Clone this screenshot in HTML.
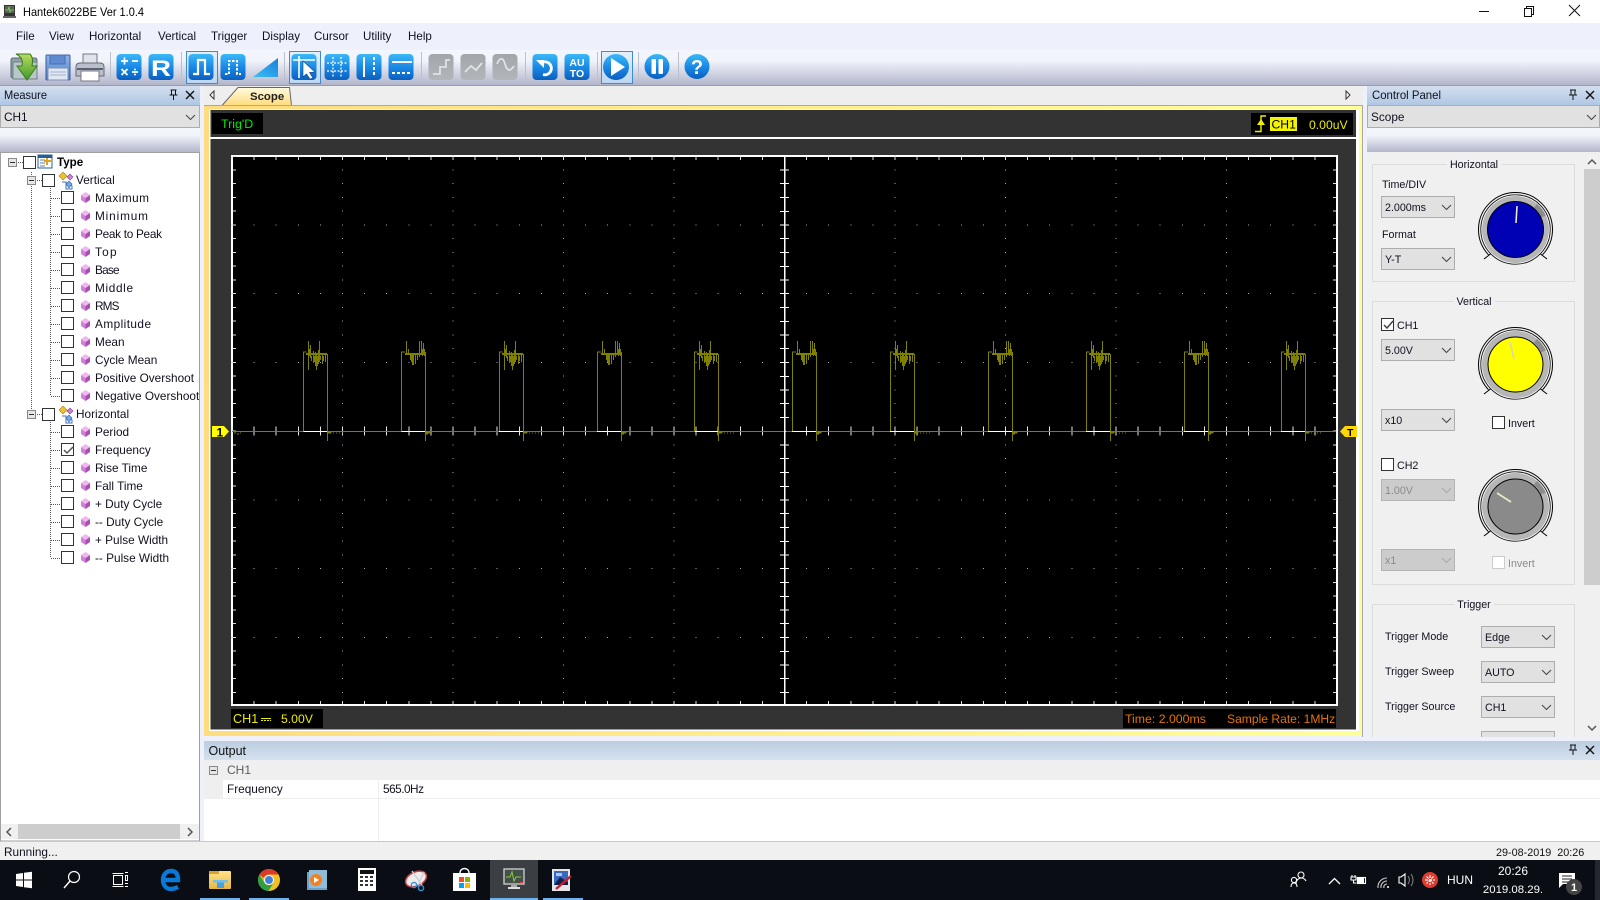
<!DOCTYPE html>
<html lang="en">
<head>
<meta charset="utf-8">
<title>Hantek6022BE Ver 1.0.4</title>
<style>
html,body{margin:0;padding:0;width:1600px;height:900px;overflow:hidden;background:#eef1fb}
svg{display:block;font-family:"Liberation Sans",sans-serif;font-size:12px;fill:#000}
.p{font-size:10.7px;fill:#101020}
.m{font-size:11.8px;fill:#101020}
.w{fill:#fff}
.o{font-size:12.3px;fill:#e67300}
.y{font-size:12.2px;fill:#ecec00}
.d{fill:#8a8a8a}
.c rect,.c line,.c path{shape-rendering:crispEdges}
</style>
</head>
<body>
<svg width="1600" height="900" viewBox="0 0 1600 900" xmlns="http://www.w3.org/2000/svg">
<defs>
<linearGradient id="tb" x1="0" y1="0" x2="0" y2="1"><stop offset="0" stop-color="#f3f6fd"/><stop offset=".3" stop-color="#f1f4fb"/><stop offset="1" stop-color="#b3b6cb"/></linearGradient>
<linearGradient id="dk" x1="0" y1="0" x2="0" y2="1"><stop offset="0" stop-color="#d3dfee"/><stop offset="1" stop-color="#afc7e4"/></linearGradient>
<linearGradient id="out" x1="0" y1="0" x2="0" y2="1"><stop offset="0" stop-color="#bccde0"/><stop offset="1" stop-color="#d4e0ee"/></linearGradient>
<linearGradient id="bl" x1="0" y1="0" x2="0" y2="1"><stop offset="0" stop-color="#3cb8f8"/><stop offset=".5" stop-color="#1a8ae6"/><stop offset="1" stop-color="#0b5fc0"/></linearGradient>
<linearGradient id="gr" x1="0" y1="0" x2="0" y2="1"><stop offset="0" stop-color="#a2a6ab"/><stop offset="1" stop-color="#b2b6ba"/></linearGradient>
<linearGradient id="sel" x1="0" y1="0" x2="0" y2="1"><stop offset="0" stop-color="#e6f0fb"/><stop offset="1" stop-color="#bcd6f0"/></linearGradient>
<linearGradient id="yl" gradientUnits="userSpaceOnUse" x1="204" y1="0" x2="1362" y2="0"><stop offset="0" stop-color="#ffdc7e"/><stop offset="1" stop-color="#ffff99"/></linearGradient>
<linearGradient id="tab" x1="0" y1="0" x2="0" y2="1"><stop offset="0" stop-color="#fffbe0"/><stop offset="1" stop-color="#ffdc7c"/></linearGradient>
<linearGradient id="flop" x1="0" y1="0" x2="0" y2="1"><stop offset="0" stop-color="#8fb4ea"/><stop offset="1" stop-color="#4f80cc"/></linearGradient>
<linearGradient id="grn" x1="0" y1="0" x2="0" y2="1"><stop offset="0" stop-color="#b8dc60"/><stop offset="1" stop-color="#3f9a28"/></linearGradient>
<linearGradient id="ramp" x1="1" y1="0" x2="0" y2="1"><stop offset="0" stop-color="#1a7ee0"/><stop offset="1" stop-color="#3cc0f0"/></linearGradient>
<linearGradient id="fold" x1="0" y1="0" x2="0" y2="1"><stop offset="0" stop-color="#ffe38a"/><stop offset="1" stop-color="#e8b840"/></linearGradient>

<rect id="cb" width="12" height="12" fill="#fff" stroke="#333" shape-rendering="crispEdges"/>
<g id="dm"><polygon points="4.5,0 9,3 4.5,6 0,3" fill="#f0b8f0"/><polygon points="0,3 4.5,6 4.5,11 0,8" fill="#d080d8"/><polygon points="9,3 4.5,6 4.5,11 9,8" fill="#a850b0"/></g>
<g id="mn" shape-rendering="crispEdges"><rect x=".5" y=".5" width="8" height="8" fill="#e6e6e6" stroke="#888"/><path d="M2 4.5h5" stroke="#333" fill="none"/></g>
<path id="ch" d="M0 0l4.5 4.5L9 0" fill="none" stroke="#444"/>
<path id="chd" d="M0 0l4.5 4.5L9 0" fill="none" stroke="#aaa"/>
<g id="pin" fill="none" stroke="#111"><path d="M-3 -5h6M-2 -5v5M2 -5v5M-4 0h8M0 0v5" shape-rendering="crispEdges"/></g>
<path id="xx" d="M-4 -4L4 4M4 -4L-4 4" fill="none" stroke="#111" stroke-width="1.4"/>
<g id="vi"><polygon points="4,4 8,0 12,4 8,8" fill="#f0c030" stroke="#a08020" stroke-width=".6"/><path d="M7 10h4v7h6v-3l-3-3" fill="#fff" stroke="#4070c0"/><polygon points="12,5 15,2 18,5 15,8" fill="#d080d0" stroke="#804090" stroke-width=".6"/><polygon points="11,12 14,9 17,12 14,16" fill="#70a8e8" stroke="#3060a0" stroke-width=".6"/></g>
<g id="kn">
<path d="M-27 25.300A37 37 0 1 1 27 25.300" fill="none" stroke="#000"/>
<path d="M-31.500 29.500L-22.500 22.500M31.500 29.500L22.500 22.500" stroke="#000" fill="none"/>
<circle r="34.700" fill="#fff" stroke="#111" stroke-width=".9"/>
<circle r="33.500" fill="#b6b6b6"/>
<path d="M19.900 -23.700A31 31 0 0 1 28.100 -13.100" fill="none" stroke="#8c8c8c" stroke-width="5"/>
</g>
<g id="a" fill="none" stroke="#808000" shape-rendering="crispEdges">
<path d="M.5 431V352H3.5M3 353.5H24M3 354.5H24M24.5 354V441"/>
<path d="M5.5 341V370M6.5 349V356M7.5 345V358M8.5 356V361M10.5 351V363M11.5 356V362M12.5 352V366M13.5 353V370M14.5 356V366M15.5 350V364M16.5 341V362M17.5 356V360M19.5 355V364M20.5 356V361M22.5 355V362"/>
<path d="M25 432H29M25 433H28M30 433H31M33 433H34M36 433H37M39 433H40"/>
</g>
<g id="b" fill="none" stroke="#808000" shape-rendering="crispEdges">
<path d="M.5 431V352H4M4 353.5H24M4 354.5H24M24.5 352V441"/>
<path d="M5.5 341V355M7.5 349V355M18.5 341V357M20.5 341V355M22.5 343V355M21.5 349V356M23.5 349V356M9.5 355V360M10.5 355V362M11.5 355V365M12.5 355V365M14.5 355V364M16.5 355V360"/>
<path d="M25 432H30M25 433H29M25 434H27"/>
</g>
</defs>

<!-- base -->
<rect width="1600" height="900" fill="#eef1fb"/>
<rect width="1600" height="23" fill="#fff"/>

<!-- title bar -->
<g>
<rect x="4" y="5" width="11" height="11" fill="#333"/><rect x="5" y="6" width="9" height="7" fill="#556655"/><path d="M5 10h3l1-3 1 5 1-2h3" stroke="#9c6" fill="none" stroke-width=".8"/><rect x="3" y="16" width="13" height="2" fill="#666"/>
<text x="23" y="16" textLength="121" lengthAdjust="spacingAndGlyphs">Hantek6022BE Ver 1.0.4</text>
<g stroke="#111" fill="none" shape-rendering="crispEdges"><path d="M1479 11.5h10"/><rect x="1524.5" y="8.5" width="7" height="8"/><path d="M1526.500 8.500v-2h7v8h-2"/></g>
<path d="M1569 5l11 11M1580 5l-11 11" stroke="#111" fill="none"/>
</g>

<!-- menu -->
<rect y="23" width="1600" height="27" fill="#eef1fb"/>
<g class="m" style="font-size:11.6px">
<text x="16" y="40">File</text><text x="49" y="40">View</text><text x="89" y="40">Horizontal</text><text x="158" y="40">Vertical</text><text x="211" y="40">Trigger</text><text x="262" y="40">Display</text><text x="314" y="40">Cursor</text><text x="363" y="40">Utility</text><text x="408" y="40">Help</text>
</g>

<!-- toolbar -->
<rect y="50" width="1600" height="35" fill="url(#tb)"/>
<rect y="85" width="1600" height="1" fill="#9c9ca4"/>
<g stroke="#bcc0cc" shape-rendering="crispEdges"><path d="M110.500 52v30M181.500 52v30M284.500 52v30M421.500 52v30M525.500 52v30M597.500 52v30M638.500 52v30M678.500 52v30"/></g>
<g fill="url(#sel)" stroke="#3f8ad8" shape-rendering="crispEdges"><rect x="186.500" y="51.500" width="31" height="32"/><rect x="289.500" y="51.500" width="31" height="32"/><rect x="601.500" y="51.500" width="31" height="32"/></g>

<!-- open -->
<rect x="11" y="58" width="26" height="20" rx="2" fill="#8ea2a8" stroke="#5a6a70"/>
<rect x="13" y="62" width="24" height="17" fill="#b8c8c8" stroke="#708088"/>
<path d="M16 54h14c3 3 3 7 2 12h5l-10 14-10-14h5c1-5 0-9-6-12z" fill="url(#grn)" stroke="#3a7a20"/>
<!-- save -->
<rect x="46" y="55" width="24" height="25" rx="1" fill="url(#flop)" stroke="#3a5c9c"/>
<rect x="50" y="55" width="15" height="9" fill="#5f8ad0" stroke="#4870b0"/>
<rect x="48" y="68" width="20" height="12" fill="#dfe6f4" stroke="#8090b0"/>
<path d="M50 72h16M50 75h16" stroke="#a8b4cc"/>
<!-- print -->
<rect x="83" y="54" width="14" height="10" fill="#dfe3ea" stroke="#778"/>
<path d="M76 67q0-4 4-4h20q4 0 4 4v9H76z" fill="#b9c0cc" stroke="#667"/>
<rect x="77" y="68" width="26" height="2" fill="#5a6270"/>
<rect x="81" y="71" width="18" height="10" fill="#fff" stroke="#778"/>

<!-- blue buttons -->
<g fill="url(#bl)">
<rect x="116.500" y="54" width="25" height="26" rx="4"/><rect x="148.500" y="54" width="25" height="26" rx="4"/>
<rect x="188.500" y="54" width="25" height="26" rx="4"/><rect x="220.500" y="54" width="25" height="26" rx="4"/>
<rect x="291.500" y="54" width="25" height="26" rx="4"/><rect x="324.500" y="54" width="25" height="26" rx="4"/><rect x="356.500" y="54" width="25" height="26" rx="4"/><rect x="388.500" y="54" width="25" height="26" rx="4"/>
<rect x="532.500" y="54" width="25" height="26" rx="4"/><rect x="564.500" y="54" width="25" height="26" rx="4"/>
</g>
<g fill="url(#gr)"><rect x="428.500" y="54" width="25" height="26" rx="4"/><rect x="460.500" y="54" width="25" height="26" rx="4"/><rect x="492.500" y="54" width="25" height="26" rx="4"/></g>
<polygon points="253,77 278,58 278,77" fill="url(#ramp)"/>
<g fill="url(#bl)"><circle cx="616" cy="67" r="13"/><circle cx="657" cy="66.500" r="12.500"/><circle cx="697" cy="66.500" r="12.500"/></g>

<g stroke="#fff" fill="none" stroke-width="1.8">
<path d="M121 61h7M124.500 57.500v7M132 61h6M121.500 69l6 6M127.500 69l-6 6M132 72h6"/>
<path d="M193 74h5V60h7v14h5" stroke-width="2.2"/>
<path d="M225 74h4V61h8v13h4" stroke-width="2" stroke-dasharray="2.500 1.500"/>
<path d="M293 60h22M299 56v22" stroke-width="1.600"/>
<path d="M327 63h20M327 71h20" stroke-width="1.300" stroke-dasharray="2 1.500"/><path d="M333 57v20M341 57v20" stroke-width="1.300" stroke-dasharray="2 1.500"/>
<path d="M364 57v20" stroke-width="2"/><path d="M374 57v20" stroke-width="2" stroke-dasharray="3 2"/>
<path d="M392 62h20" stroke-width="2"/><path d="M392 73h20" stroke-width="2" stroke-dasharray="3 2"/>
<path d="M540 64a6.500 6.500 0 1 1 3 10.500" stroke-width="2.800"/>
</g>
<polygon points="303,61 315,72 309.500,72.500 313,78 310,79 306.500,74 303,77" fill="#fff" stroke="#104080" stroke-width=".6"/>
<circle cx="135" cy="69.500" r="1" fill="#fff"/><circle cx="135" cy="74.500" r="1" fill="#fff"/>
<polygon points="536,60 544,60 544,68" fill="#fff"/>
<g stroke="#e0e2e4" fill="none" stroke-width="1.800">
<path d="M433 74h7v-7h6v-7h4"/><path d="M465 72l6-6 5 4 6-7"/><path d="M497 64c3-7 6-7 8 0s5 8 9 2"/>
</g>
<text x="151" y="76" style="font-size:22px;font-weight:bold;fill:#fff" textLength="20" lengthAdjust="spacingAndGlyphs">R</text>
<text x="577" y="66" text-anchor="middle" style="font-size:10.5px;font-weight:bold;fill:#fff">AU</text>
<text x="577" y="77" text-anchor="middle" style="font-size:10.5px;font-weight:bold;fill:#fff">TO</text>
<polygon points="611,58 611,76 625,67" fill="#fff"/>
<rect x="651.500" y="59" width="4.500" height="15" rx="1" fill="#fff"/><rect x="658.500" y="59" width="4.500" height="15" rx="1" fill="#fff"/>
<text x="697" y="74" text-anchor="middle" style="font-size:20px;font-weight:bold;fill:#fff">?</text>

<!-- LEFT: Measure -->
<rect x="0" y="86" width="200" height="19" fill="url(#dk)"/>
<text x="4" y="99" class="m" textLength="43" lengthAdjust="spacingAndGlyphs">Measure</text>
<use href="#pin" x="173.500" y="95"/><use href="#xx" x="190" y="95"/>
<rect x="0.500" y="105.500" width="199" height="22" fill="#e1e1e1" stroke="#adadad" shape-rendering="crispEdges"/>
<text x="4" y="121" class="m">CH1</text><use href="#ch" x="186" y="115"/>
<rect x="0" y="128" width="200" height="24" fill="url(#tb)"/>
<rect x="0.500" y="152.500" width="199" height="688.500" fill="#fff" stroke="#a0a0a0" shape-rendering="crispEdges"/>

<!-- tree lines -->
<g stroke="#555" stroke-dasharray="1 1" fill="none" shape-rendering="crispEdges">
<path d="M16 162.500h7M31.500 172V410M35 180.500h7M35 414.500h7"/>
<path d="M50.500 188V396M50.500 422V558"/>
<path d="M51 198.500h10M51 216.500h10M51 234.500h10M51 252.500h10M51 270.500h10M51 288.500h10M51 306.500h10M51 324.500h10M51 342.500h10M51 360.500h10M51 378.500h10M51 396.500h10M51 432.500h10M51 450.500h10M51 468.500h10M51 486.500h10M51 504.500h10M51 522.500h10M51 540.500h10M51 558.500h10"/>
</g>
<use href="#mn" x="8" y="158"/><use href="#mn" x="27" y="176"/><use href="#mn" x="27" y="410"/>
<use href="#cb" x="23.500" y="156.500"/><use href="#cb" x="42.500" y="174.500"/><use href="#cb" x="42.500" y="408.500"/>
<!-- Type icon -->
<rect x="38" y="155" width="14" height="13" fill="#fff" stroke="#2a5c9a"/><rect x="38" y="155" width="14" height="3" fill="#2a5c9a"/><path d="M40 160h5M40 163h5M40 166h5" stroke="#5080c0"/><path d="M47 158v7M44 161h7" stroke="#e0a020" stroke-width="2"/>
<use href="#vi" x="55" y="172"/><use href="#vi" x="55" y="406"/>
<text x="57" y="166" style="font-weight:bold;font-size:11.6px">Type</text>
<text x="76" y="184" class="m">Vertical</text>
<text x="76" y="418" class="m">Horizontal</text>

<g>
<use href="#cb" x="61.500" y="191.500"/><use href="#cb" x="61.500" y="209.500"/><use href="#cb" x="61.500" y="227.500"/><use href="#cb" x="61.500" y="245.500"/><use href="#cb" x="61.500" y="263.500"/><use href="#cb" x="61.500" y="281.500"/><use href="#cb" x="61.500" y="299.500"/><use href="#cb" x="61.500" y="317.500"/><use href="#cb" x="61.500" y="335.500"/><use href="#cb" x="61.500" y="353.500"/><use href="#cb" x="61.500" y="371.500"/><use href="#cb" x="61.500" y="389.500"/>
<use href="#cb" x="61.500" y="425.500"/><use href="#cb" x="61.500" y="443.500"/><use href="#cb" x="61.500" y="461.500"/><use href="#cb" x="61.500" y="479.500"/><use href="#cb" x="61.500" y="497.500"/><use href="#cb" x="61.500" y="515.500"/><use href="#cb" x="61.500" y="533.500"/><use href="#cb" x="61.500" y="551.500"/>
<use href="#dm" x="81" y="192"/><use href="#dm" x="81" y="210"/><use href="#dm" x="81" y="228"/><use href="#dm" x="81" y="246"/><use href="#dm" x="81" y="264"/><use href="#dm" x="81" y="282"/><use href="#dm" x="81" y="300"/><use href="#dm" x="81" y="318"/><use href="#dm" x="81" y="336"/><use href="#dm" x="81" y="354"/><use href="#dm" x="81" y="372"/><use href="#dm" x="81" y="390"/>
<use href="#dm" x="81" y="426"/><use href="#dm" x="81" y="444"/><use href="#dm" x="81" y="462"/><use href="#dm" x="81" y="480"/><use href="#dm" x="81" y="498"/><use href="#dm" x="81" y="516"/><use href="#dm" x="81" y="534"/><use href="#dm" x="81" y="552"/>
</g>
<path d="M64 450l3 3 6-6" fill="none" stroke="#555" stroke-width="1.5"/>
<g class="m">
<text x="95" y="202" textLength="54">Maximum</text><text x="95" y="220" textLength="53">Minimum</text><text x="95" y="238" textLength="67">Peak to Peak</text><text x="95" y="256" textLength="21.500">Top</text><text x="95" y="274" textLength="24.500">Base</text><text x="95" y="292" textLength="38">Middle</text><text x="95" y="310" textLength="24.500">RMS</text><text x="95" y="328" textLength="56">Amplitude</text><text x="95" y="346">Mean</text><text x="95" y="364">Cycle Mean</text><text x="95" y="382">Positive Overshoot</text><text x="95" y="400">Negative Overshoot</text>
<text x="95" y="436">Period</text><text x="95" y="454">Frequency</text><text x="95" y="472">Rise Time</text><text x="95" y="490">Fall Time</text><text x="95" y="508">+ Duty Cycle</text><text x="95" y="526">-- Duty Cycle</text><text x="95" y="544">+ Pulse Width</text><text x="95" y="562">-- Pulse Width</text>
</g>
<rect x="199" y="380" width="1" height="30" fill="#a0a0a0"/>
<!-- h scroll -->
<rect x="1" y="824" width="198" height="15" fill="#f0f0f0"/>
<rect x="18" y="824" width="162" height="15" fill="#cdcdcd"/>
<path d="M11 828l-4 4 4 4M188 828l4 4-4 4" fill="none" stroke="#555" stroke-width="1.5"/>

<!-- SCOPE frame -->
<rect x="204" y="86" width="1159" height="19" fill="#eeeeee"/>
<path d="M222 105.500L238 87.500H289.500L291.500 105.500z" fill="url(#tab)" stroke="#666"/>
<text x="250" y="100" style="font-weight:bold;font-size:11.4px;fill:#222">Scope</text>
<path d="M214 91l-4 4 4 4zM1346 91l4 4-4 4z" fill="#fff" stroke="#333"/>
<rect x="204" y="105" width="1159" height="1" fill="#a8a8a8"/>
<rect x="204" y="106" width="1158" height="630" fill="url(#yl)"/>
<rect x="1362" y="105" width="1" height="632" fill="#a8a8a8"/>
<rect x="209" y="109.500" width="1150" height="621.500" fill="#fff"/>
<rect x="210.500" y="110" width="1145.500" height="619.500" fill="#333"/>
<rect x="210.500" y="137" width="1145.500" height="2" fill="#fff"/>

<rect x="212" y="113" width="51" height="21" fill="#000"/>
<text x="221" y="128" style="font-size:12.4px;fill:#00ee00">Trig'D</text>
<rect x="1251" y="113" width="102" height="22" fill="#000"/>
<path d="M1255 131.500h6v-15.500h5" fill="none" stroke="#f0f000" stroke-width="1.400"/>
<polygon points="1261,119 1257,125 1265,125" fill="#f0f000"/>
<rect x="1270" y="117" width="27" height="14" fill="#f4f400"/>
<text x="1271.500" y="128.500" style="font-size:12.2px;fill:#000">CH1</text>
<text x="1309" y="129" class="y">0.00uV</text>

<!-- PLOT -->
<rect x="232" y="156" width="1105" height="549" fill="#000" stroke="#fff" stroke-width="2" shape-rendering="crispEdges"/>
<g fill="none" class="c" shape-rendering="crispEdges">
<g stroke="#aaa" stroke-dasharray="1 21.1">
<path d="M231.500 224.750H1337M231.500 293.500H1337M231.500 362.250H1337M231.500 499.750H1337M231.500 568.500H1337M231.500 637.250H1337"/>
</g>
<g stroke="#aaa" stroke-dasharray="1 12.75">
<path d="M342.500 155.500V706M453 155.500V706M563.500 155.500V706M674 155.500V706M895 155.500V706M1005.500 155.500V706M1116 155.500V706M1226.500 155.500V706"/>
</g>
<g stroke="#ddd" stroke-width="3" stroke-dasharray="1 12.75"><path d="M234.500 155.500V706M1334.500 155.500V706"/></g>
<g stroke="#ddd" stroke-width="3" stroke-dasharray="1 21.1"><path d="M231.500 158.500H1337M231.500 702.500H1337"/></g>
<path d="M231.500 431.500H1337" stroke="#fff"/>
<path d="M231.500 431H1337" stroke="#e8e8e8" stroke-width="9" stroke-dasharray="1 21.1"/>
<path stroke="#fff" d="M780 169.750h9M780 183.500h9M780 197.250h9M780 211.500h9M780 224.750h9M780 238.500h9M780 252.250h9M780 266.500h9M780 279.750h9M780 293.500h9M780 307.250h9M780 321.500h9M780 334.750h9M780 348.500h9M780 362.250h9M780 376.500h9M780 389.750h9M780 403.500h9M780 417.250h9M780 444.750h9M780 458.500h9M780 472.250h9M780 486.500h9M780 499.750h9M780 513.500h9M780 527.250h9M780 541.500h9M780 554.750h9M780 568.500h9M780 582.250h9M780 596.500h9M780 609.750h9M780 623.500h9M780 637.250h9M780 651.500h9M780 664.750h9M780 678.500h9M780 692.250h9"/>
<rect x="784" y="157" width="1.600" height="547" fill="#fff" shape-rendering="auto"/>
<path d="M232 431.500H303.500M327.500 431.500H401.300M425.500 431.500H499M523 431.500H597M621 431.500H695M719 431.500H784M786 431.500H792M816 431.500H890M914 431.500H988M1012 431.500H1086M1110 431.500H1184M1208 431.500H1281M1305 431.500H1336" stroke="#808000"/>
<path d="M234 433H236M237 434H239M240 433H241" stroke="#808000"/>
</g>
<use href="#a" x="303" y="0"/><use href="#b" x="401" y="0"/><use href="#a" x="499" y="0"/><use href="#b" x="597" y="0"/><use href="#a" x="694" y="0"/><use href="#b" x="792" y="0"/><use href="#a" x="890" y="0"/><use href="#b" x="988" y="0"/><use href="#a" x="1086" y="0"/><use href="#b" x="1184" y="0"/><use href="#a" x="1281" y="0"/>

<!-- markers -->
<polygon points="212,426 224,426 229,431.500 224,437 212,437" fill="#ffff00"/>
<text x="216.500" y="436.500" style="font-size:12px;font-weight:bold;fill:#000">1</text>
<polygon points="1345,426 1357,426 1357,437 1345,437 1340,431.500" fill="#ffd800"/>
<text x="1347" y="436" style="font-size:10.5px;font-weight:bold;fill:#000">T</text>

<!-- bottom scope labels -->
<rect x="231" y="709" width="92" height="19" fill="#000"/>
<text x="233" y="723" class="y" style="font-size:12.6px">CH1</text>
<path d="M261 718.500h10" stroke="#ecec00" shape-rendering="crispEdges"/><path d="M261 720.500h10" stroke="#ecec00" stroke-dasharray="2 1" shape-rendering="crispEdges"/>
<text x="281" y="723" class="y">5.00V</text>
<rect x="1123" y="709" width="213" height="19" fill="#000"/>
<text x="1125" y="723" class="o">Time: 2.000ms</text>
<text x="1227" y="723" class="o" style="font-size:12.1px">Sample Rate: 1MHz</text>

<!-- RIGHT: Control panel -->
<rect x="1367" y="86" width="233" height="19" fill="url(#dk)"/>
<text x="1372" y="99" class="m" textLength="69" lengthAdjust="spacingAndGlyphs">Control Panel</text>
<use href="#pin" x="1573" y="95"/><use href="#xx" x="1590" y="95"/>
<rect x="1367.500" y="105.500" width="232" height="22" fill="#e1e1e1" stroke="#adadad" shape-rendering="crispEdges"/>
<text x="1371" y="121" class="m">Scope</text><use href="#ch" x="1587" y="115"/>
<rect x="1367" y="128" width="233" height="24" fill="url(#tb)"/>
<rect x="1367" y="152" width="233" height="585" fill="#f0f0f0"/>
<!-- scrollbar -->
<rect x="1584" y="152" width="16" height="585" fill="#f0f0f0"/>
<rect x="1584" y="169" width="16" height="416" fill="#cdcdcd"/>
<path d="M1588 164l4-4 4 4M1588 726l4 4 4-4" fill="none" stroke="#555" stroke-width="1.5"/>
<!-- groups -->
<g fill="none" stroke="#dcdcdc" shape-rendering="crispEdges">
<rect x="1372.500" y="164.500" width="202" height="117"/>
<rect x="1372.500" y="301.500" width="202" height="283"/>
<path d="M1372.500 737V604.500H1574.500V737"/>
</g>
<rect x="1447" y="160" width="55" height="9" fill="#f0f0f0"/><rect x="1453" y="297" width="42" height="9" fill="#f0f0f0"/><rect x="1454" y="600" width="40" height="9" fill="#f0f0f0"/>
<g class="p" text-anchor="middle"><text x="1474" y="168">Horizontal</text><text x="1474" y="305">Vertical</text><text x="1474" y="608">Trigger</text></g>
<g class="p"><text x="1382" y="188">Time/DIV</text><text x="1382" y="238">Format</text>
<text x="1397" y="329">CH1</text><text x="1397" y="469">CH2</text>
<text x="1508" y="427">Invert</text>
<text x="1385" y="640">Trigger Mode</text><text x="1385" y="675">Trigger Sweep</text><text x="1385" y="710">Trigger Source</text></g>
<text x="1508" y="567" class="p" style="fill:#8a8a8a">Invert</text>
<!-- combos -->
<g fill="#e1e1e1" stroke="#adadad" shape-rendering="crispEdges">
<rect x="1381.500" y="196.500" width="73" height="21"/><rect x="1381.500" y="248.500" width="73" height="21"/><rect x="1381.500" y="339.500" width="73" height="21"/><rect x="1381.500" y="409.500" width="73" height="21"/>
<rect x="1481.500" y="626.500" width="73" height="21"/><rect x="1481.500" y="661.500" width="73" height="21"/><rect x="1481.500" y="696.500" width="73" height="21"/><rect x="1481.500" y="731.500" width="73" height="21"/>
</g>
<g fill="#cccccc" stroke="#b4b4b4" shape-rendering="crispEdges"><rect x="1381.500" y="479.500" width="73" height="21"/><rect x="1381.500" y="549.500" width="73" height="21"/></g>
<g class="p"><text x="1385" y="211">2.000ms</text><text x="1385" y="263">Y-T</text><text x="1385" y="354">5.00V</text><text x="1385" y="424">x10</text>
<text x="1485" y="641">Edge</text><text x="1485" y="676">AUTO</text><text x="1485" y="711">CH1</text></g>
<text x="1385" y="494" class="p" style="fill:#8a8a8a">1.00V</text><text x="1385" y="564" class="p" style="fill:#8a8a8a">x1</text>
<use href="#ch" x="1442" y="205"/><use href="#ch" x="1442" y="257"/><use href="#ch" x="1442" y="348"/><use href="#ch" x="1442" y="418"/>
<use href="#chd" x="1442" y="488"/><use href="#chd" x="1442" y="558"/>
<use href="#ch" x="1542" y="635"/><use href="#ch" x="1542" y="670"/><use href="#ch" x="1542" y="705"/>
<!-- checkboxes -->
<use href="#cb" x="1381.500" y="318.500"/><path d="M1384 325l3 3 6-7" fill="none" stroke="#444" stroke-width="1.5"/>
<use href="#cb" x="1381.500" y="458.500"/>
<use href="#cb" x="1492.500" y="416.500"/>
<rect x="1492.500" y="556.500" width="12" height="12" fill="#fff" stroke="#ccc" shape-rendering="crispEdges"/>
<!-- knobs -->
<use href="#kn" x="1515.500" y="229.500"/><circle cx="1515.500" cy="229.500" r="28" fill="#0000b4" stroke="#000"/><path d="M1517 206L1516 223" stroke="#e8e8c8" stroke-width="1.600"/>
<use href="#kn" x="1515.500" y="364.500"/><circle cx="1515.500" cy="364.500" r="27.500" fill="#ffff00" stroke="#000"/><path d="M1510 342L1514 359" stroke="#d8d8b0" stroke-width="1.600"/>
<use href="#kn" x="1515.500" y="506.500"/><circle cx="1515.500" cy="506.500" r="27.500" fill="#8a8a8a" stroke="#000"/><path d="M1497 493L1511 502" stroke="#e8e8c8" stroke-width="1.800"/>

<!-- OUTPUT -->
<rect x="200" y="737" width="1400" height="4" fill="#eef1fb"/>
<rect x="204" y="741" width="1396" height="19" fill="url(#out)"/>
<text x="208.500" y="755" style="font-size:12.5px;fill:#111">Output</text>
<use href="#pin" x="1573" y="750"/><use href="#xx" x="1590" y="750"/>
<rect x="204" y="760" width="1396" height="81" fill="#fff"/>
<rect x="204" y="760" width="1396" height="20" fill="#efefef"/>
<rect x="204" y="780" width="19" height="18" fill="#efefef"/>
<use href="#mn" x="209" y="766"/>
<text x="227" y="774" style="font-size:12px;fill:#5c5c5c">CH1</text>
<text x="227" y="793" class="m">Frequency</text>
<text x="383" y="793" class="m" textLength="41">565.0Hz</text>
<rect x="204" y="798" width="1396" height="1" fill="#eee"/>
<rect x="378" y="780" width="1" height="61" fill="#eee"/>

<!-- STATUS -->
<rect x="0" y="841" width="1600" height="1" fill="#c8c8c8"/>
<rect x="0" y="842" width="1600" height="18" fill="#f0f0f0"/>
<text x="4" y="856" class="m">Running...</text>
<text x="1496" y="856" style="font-size:10.8px;fill:#111" xml:space="preserve">29-08-2019  20:26</text>

<!-- TASKBAR -->
<rect x="0" y="860" width="1600" height="40" fill="#0a0e14"/>
<rect x="1595" y="860" width="5" height="40" fill="#24282e"/>
<rect x="490" y="860" width="48" height="40" fill="#3b3e43"/>
<g fill="#6cb2ee"><rect x="200" y="898" width="40" height="2"/><rect x="249" y="898" width="40" height="2"/><rect x="490" y="898" width="48" height="2"/><rect x="543" y="898" width="40" height="2"/></g>
<!-- win -->
<polygon points="16,874 23,873 23,879.500 16,879.500" fill="#fff"/><polygon points="24,872.800 32,871.700 32,879.500 24,879.500" fill="#fff"/><polygon points="16,880.500 23,880.500 23,887 16,886" fill="#fff"/><polygon points="24,880.500 32,880.500 32,888.300 24,887.200" fill="#fff"/>
<!-- search -->
<circle cx="74" cy="877" r="5.500" fill="none" stroke="#fff" stroke-width="1.200"/><path d="M70 881l-6 7" stroke="#fff" stroke-width="1.400"/>
<!-- task view -->
<g fill="none" stroke="#fff" stroke-width="1.200" shape-rendering="crispEdges"><path d="M112.500 873.500h11M112.500 886.500h11"/><rect x="113.500" y="875.500" width="9" height="9"/><rect x="125.500" y="875.500" width="2" height="5"/><path d="M125 872.500h3M125 883.500h3M125 886.500h3"/></g>
<!-- edge -->
<path d="M163 880h15c0-7-3-9-7-9-5 0-8 4-8 9 0 6 4 9 8 9 3 0 5-1 7-2" fill="none" stroke="#0a78d7" stroke-width="4.400"/>
<!-- explorer -->
<rect x="209" y="871" width="22" height="18" rx="1" fill="url(#fold)"/><rect x="209" y="871" width="10" height="3" fill="#d8a030"/>
<rect x="217" y="882" width="7" height="6" fill="#4aa0e0"/><rect x="213" y="880" width="15" height="2.500" fill="#70c0f0"/>
<!-- chrome -->
<circle cx="269" cy="880" r="11" fill="#f0c020"/>
<path d="M259.500 874.500A11 11 0 0 1 278.500 874.500H269A5.500 5.500 0 0 0 263.800 878z" fill="#d83a2c"/>
<path d="M259.500 874.500A11 11 0 0 0 268.500 891L273.500 882.800A5.500 5.500 0 0 1 264 882z" fill="#2f9e48"/>
<circle cx="269" cy="880" r="5" fill="#fff"/><circle cx="269" cy="880" r="4" fill="#3f7fe0"/>
<!-- media -->
<rect x="307" y="872" width="20" height="18" fill="#6ba0c8"/><rect x="309" y="870" width="18" height="18" fill="#90bcd8"/>
<circle cx="316" cy="880" r="6" fill="#f08020"/><polygon points="314,877 314,883 319,880" fill="#fff"/>
<!-- calc -->
<rect x="358" y="868" width="18" height="23" fill="#fff"/><rect x="360" y="870" width="14" height="4" fill="#111"/>
<g fill="#333"><rect x="360" y="876" width="3" height="2"/><rect x="365" y="876" width="3" height="2"/><rect x="370" y="876" width="3" height="2"/><rect x="360" y="880" width="3" height="2"/><rect x="365" y="880" width="3" height="2"/><rect x="370" y="880" width="3" height="2"/><rect x="360" y="884" width="3" height="2"/><rect x="365" y="884" width="3" height="2"/><rect x="370" y="884" width="3" height="2"/></g>
<!-- snip -->
<ellipse cx="416" cy="879" rx="11" ry="7" fill="#f0ecec" stroke="#c84040" stroke-width="1.500" transform="rotate(-25 416 879)"/>
<path d="M412 871l10 14M424 872l-6 13" stroke="#c8d0d8" stroke-width="1.400"/>
<circle cx="421" cy="888" r="2.600" fill="none" stroke="#3a8ed0" stroke-width="1.400"/><circle cx="414" cy="885" r="2.600" fill="none" stroke="#3a8ed0" stroke-width="1.400"/>
<!-- store -->
<path d="M453 873h23v18h-23z" fill="#fff"/><path d="M460 873c0-6 9-6 9 0" fill="none" stroke="#fff" stroke-width="1.400"/>
<rect x="459" y="877" width="5" height="5" fill="#f25022"/><rect x="465" y="877" width="5" height="5" fill="#7fba00"/><rect x="459" y="883" width="5" height="5" fill="#00a4ef"/><rect x="465" y="883" width="5" height="5" fill="#ffb900"/>
<!-- hantek -->
<rect x="504" y="869" width="20" height="15" fill="#44504a" stroke="#c8c8c8" stroke-width="1.400"/><path d="M506 877h4l2-5 2 9 2-4h5" stroke="#8cc840" fill="none"/><rect x="520" y="882" width="3" height="1.500" fill="#e04040"/><rect x="511" y="885" width="6" height="2" fill="#aaa"/><rect x="508" y="887" width="12" height="2" fill="#ddd"/>
<!-- paint -->
<rect x="552" y="869" width="18" height="22" fill="#e6e6e6"/><rect x="554" y="871" width="14" height="14" fill="#3a68c0"/><path d="M554 885l6-8 8 5v3z" fill="#10204a"/><path d="M556 873h6v3h-6z" fill="#a8c8f0"/><path d="M556 889l15-13" stroke="#c02030" stroke-width="2.400"/>

<!-- tray -->
<g fill="none" stroke="#fff" stroke-width="1.100">
<circle cx="1301" cy="875" r="3"/><path d="M1296 884c0-4 3-6 5-6s4 1 5 3"/><circle cx="1294" cy="880" r="2.600"/><path d="M1291 887c0-3 1-4 3-4s3 1 3 4"/>
<path d="M1329 884l5.500-5.500 5.500 5.500" stroke-width="1.300"/>
<path d="M1352 875v2M1355 875v2M1351 877h5v3h-5zM1353.500 880v3h3" /><rect x="1357.500" y="877.500" width="8" height="6"/>
<path d="M1378 888a9 9 0 0 1 9-10M1381 888a6 6 0 0 1 6-7M1384 888a3 3 0 0 1 3-4" stroke="#ccc"/>
<path d="M1399 877h2l4-3v12l-4-3h-2z"/><path d="M1408 876q3 4 0 8M1411 874q4 6 0 12" stroke="#777"/>
</g>
<rect x="1358" y="878" width="6" height="5" fill="#fff"/><circle cx="1388" cy="887" r="1" fill="#fff"/>
<circle cx="1430" cy="880" r="8" fill="#e13b30"/><path d="M1430 875v10M1425 880h10M1426.500 876.500l7 7M1433.500 876.500l-7 7" stroke="#fff" stroke-width="1.200" stroke-dasharray="3 1"/>
<text x="1447" y="884" class="w" style="fill:#fff">HUN</text>
<text x="1513" y="875" text-anchor="middle" style="fill:#fff">20:26</text>
<text x="1513" y="893" text-anchor="middle" style="fill:#fff;font-size:11.400px">2019.08.29.</text>
<path d="M1559 873h16v11h-12l-4 4z" fill="#fff"/><path d="M1562 876h10M1562 879h10M1562 882h7" stroke="#222" shape-rendering="crispEdges"/>
<circle cx="1574" cy="887" r="8" fill="#444"/><text x="1574" y="891" text-anchor="middle" style="font-weight:bold;font-size:11px;fill:#fff">1</text>
</svg>
</body>
</html>
